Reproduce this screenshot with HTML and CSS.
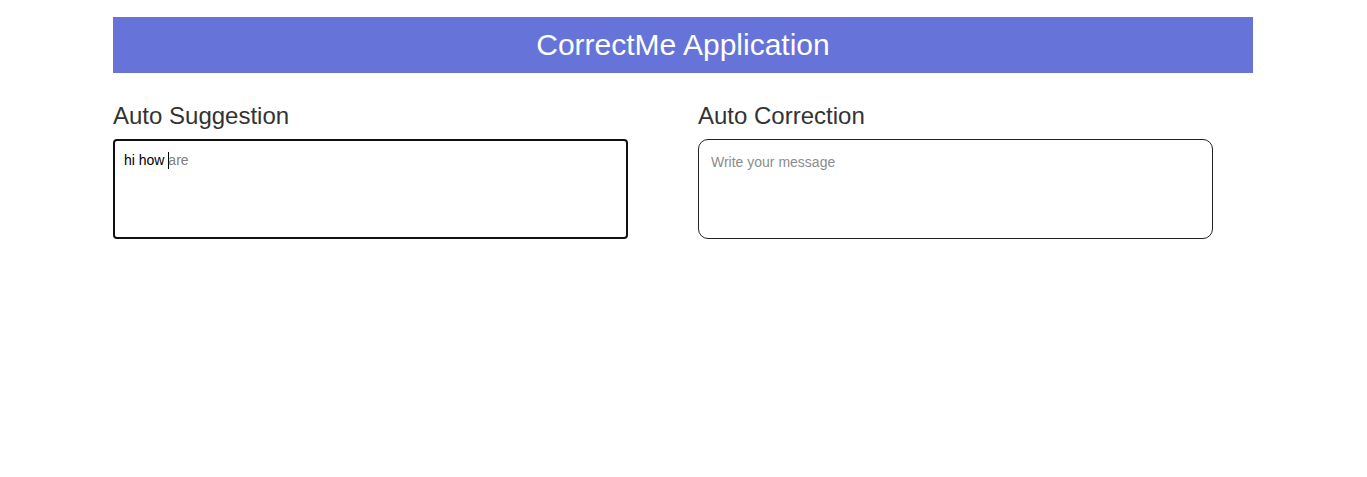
FILE: index.html
```html
<!DOCTYPE html>
<html lang="en">
<head>
<meta charset="utf-8">
<title>CorrectMe Application</title>
<link rel="stylesheet" href="styles.css">
</head>
<body>
<div class="container">
  <header class="app-header">CorrectMe Application</header>
  <main class="panels">
    <section class="panel">
      <h2 class="panel-title">Auto Suggestion</h2>
      <div class="editor editor-focused"><span class="typed">hi how </span><span class="caret"></span><span class="suggest">are</span></div>
    </section>
    <section class="panel">
      <h2 class="panel-title">Auto Correction</h2>
      <textarea class="editor editor-plain" placeholder="Write your message"></textarea>
    </section>
  </main>
</div>
</body>
</html>
```
FILE: styles.css
```css
html, body {
  margin: 0;
  padding: 0;
  background: #fff;
  font-family: "Liberation Sans", Arial, sans-serif;
}

.container {
  width: 1140px;
  margin: 17px 0 0 calc(50% - 570.5px);
}

.app-header {
  height: 56px;
  line-height: 56px;
  background: #6673d9;
  color: #fff;
  text-align: center;
  font-size: 30px;
}

.panels {
  display: grid;
  grid-template-columns: 515px 515px;
  column-gap: 70px;
  margin-top: 28px;
}

.panel-title {
  margin: 0 0 9px;
  font-size: 24px;
  font-weight: normal;
  line-height: 29px;
  color: #333;
}

.editor {
  box-sizing: border-box;
  display: block;
  width: 515px;
  height: 100px;
  margin: 0;
  font-family: "Liberation Sans", Arial, sans-serif;
  font-size: 14px;
  line-height: 16px;
  resize: none;
}

.editor-focused {
  border: 2px solid #111;
  border-radius: 4px;
  padding: 11px 9px;
  color: #000;
}

.caret {
  display: inline-block;
  width: 0;
  height: 17px;
  border-left: 1px solid #000;
  margin-right: -1px;
  vertical-align: -4px;
}

.suggest {
  color: #808080;
}

.editor-plain {
  border: 1px solid #222;
  border-radius: 10px;
  padding: 14px 12px;
  outline: none;
  color: #000;
  background: #fff;
}

.editor-plain::placeholder {
  color: #8c8c8c;
  opacity: 1;
}
```
